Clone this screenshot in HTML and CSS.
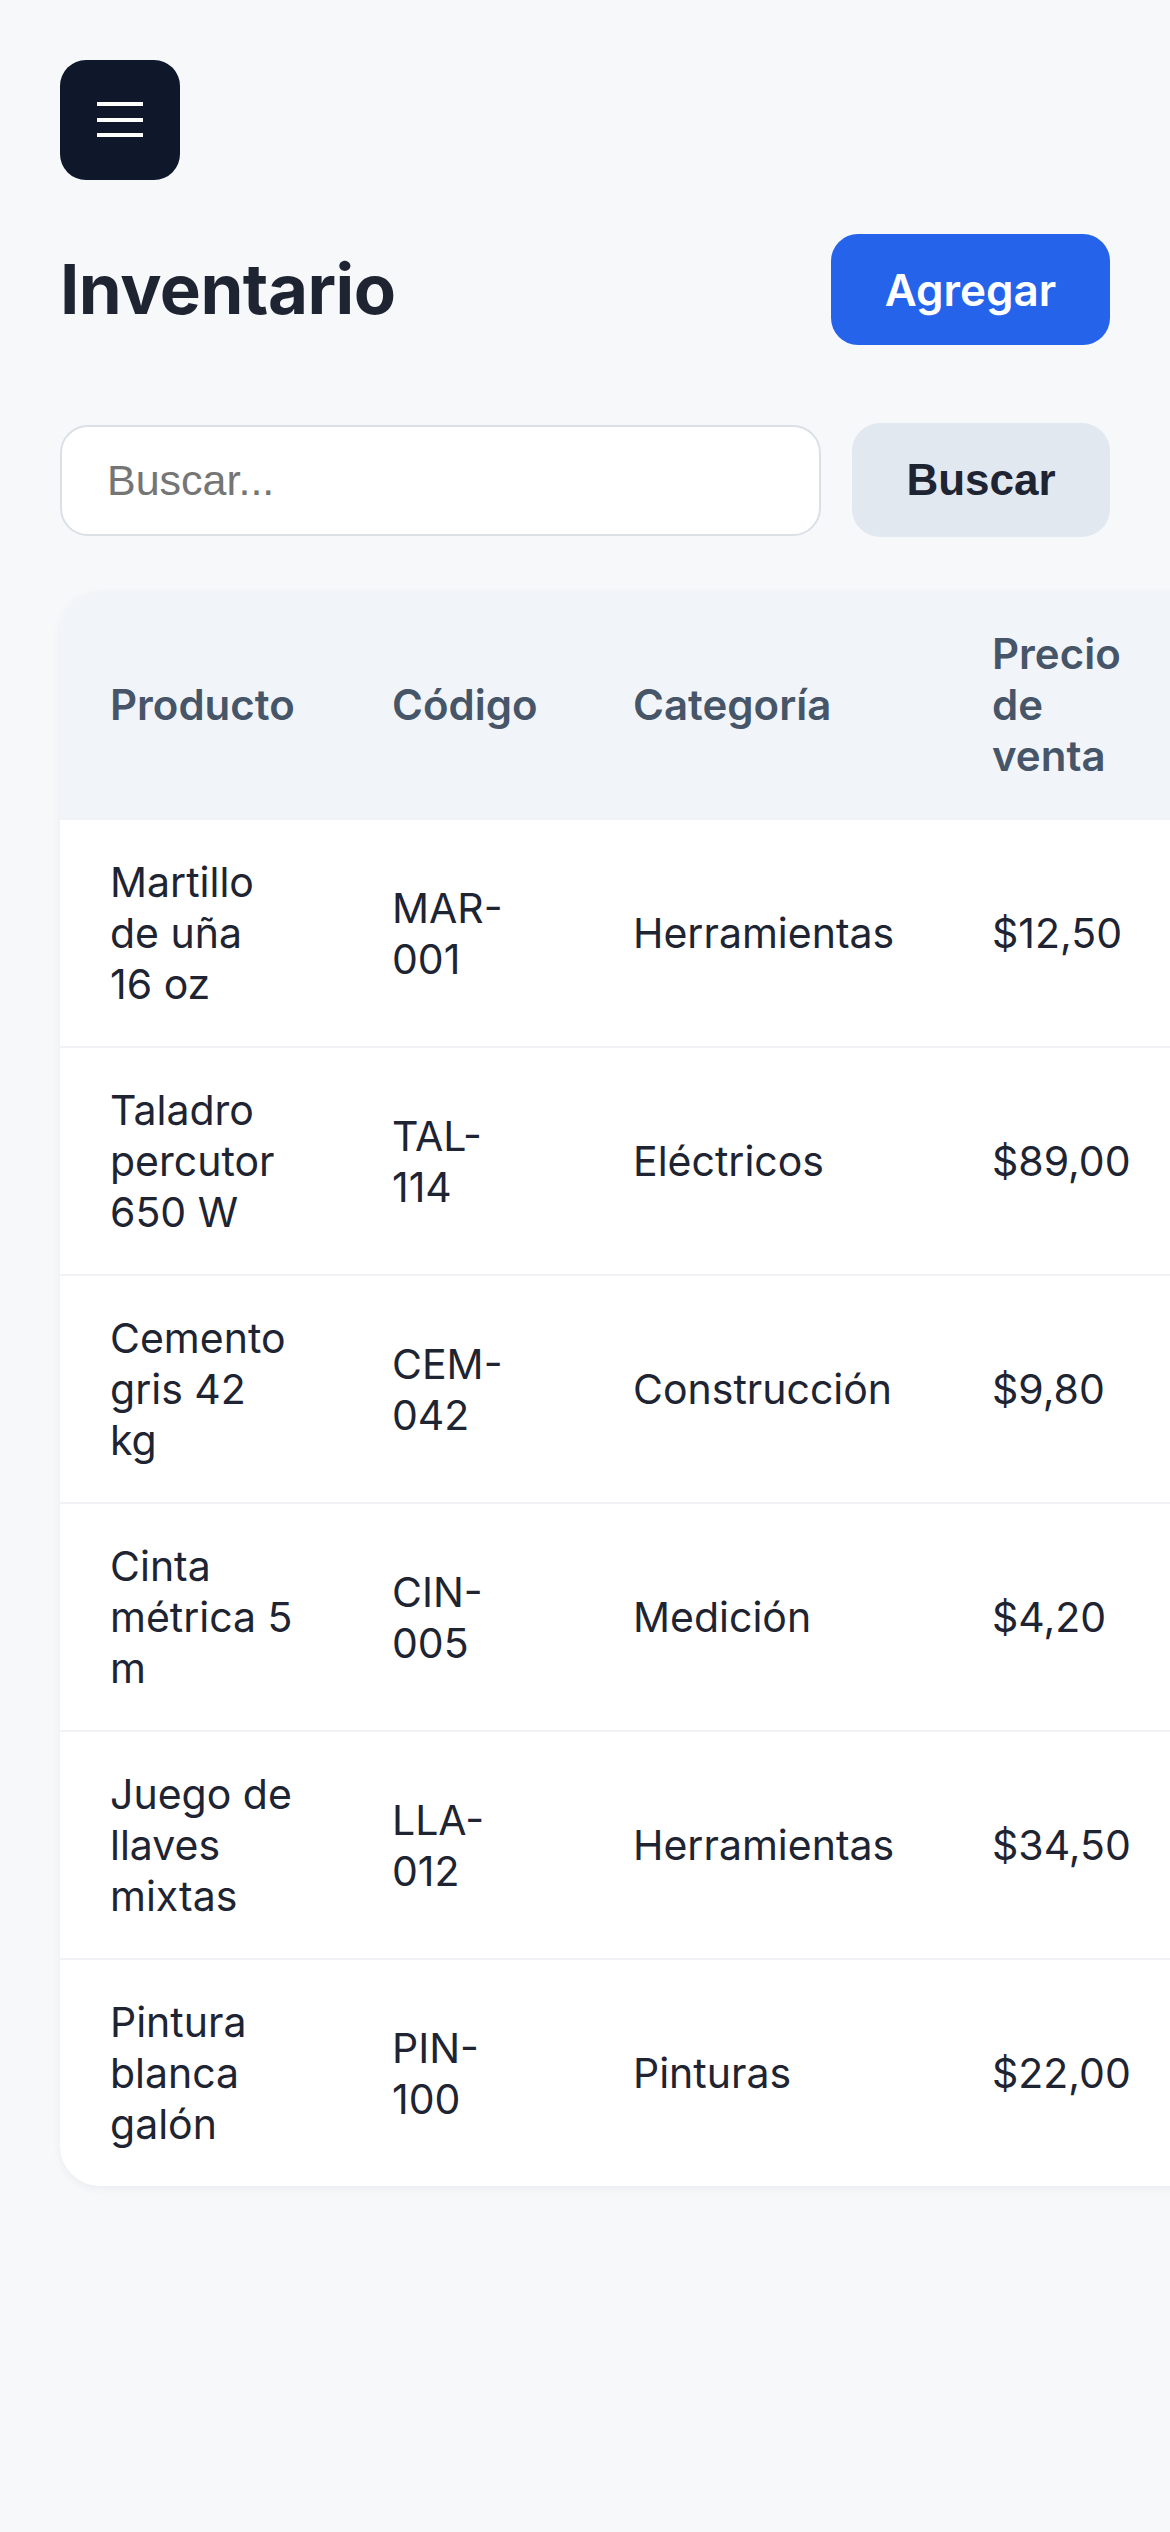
FILE: index.html
```html
<!DOCTYPE html>
<html lang="es">
<head>
<meta charset="utf-8">
<title>Inventario</title>
<link rel="stylesheet" href="styles.css">
</head>
<body>
<main class="page">
  <button class="menu-btn" aria-label="Menú">
    <svg width="120" height="120" viewBox="0 0 120 120" aria-hidden="true">
      <rect x="37" y="42" width="46" height="4" fill="#ffffff"/>
      <rect x="37" y="58" width="46" height="4" fill="#ffffff"/>
      <rect x="37" y="73" width="46" height="4" fill="#ffffff"/>
    </svg>
  </button>

  <div class="title-row">
    <h1 class="title">Inventario</h1>
    <button class="add-btn">Agregar</button>
  </div>

  <div class="search-row">
    <input class="search-input" type="text" placeholder="Buscar...">
    <button class="search-btn">Buscar</button>
  </div>

  <div class="card">
    <table class="inv-table">
      <colgroup>
        <col class="c-prod">
        <col class="c-code">
        <col class="c-cat">
        <col class="c-price">
        <col class="c-stock">
      </colgroup>
      <thead>
        <tr>
          <th>Producto</th>
          <th>Código</th>
          <th>Categoría</th>
          <th>Precio de venta</th>
          <th>Stock</th>
        </tr>
      </thead>
      <tbody>
        <tr><td>Martillo de uña 16 oz</td><td>MAR-001</td><td>Herramientas</td><td>$12,50</td><td>24</td></tr>
        <tr><td>Taladro percutor 650 W</td><td>TAL-114</td><td>Eléctricos</td><td>$89,00</td><td>8</td></tr>
        <tr><td>Cemento gris 42 kg</td><td>CEM-042</td><td>Construcción</td><td>$9,80</td><td>120</td></tr>
        <tr><td>Cinta métrica 5 m</td><td>CIN-005</td><td>Medición</td><td>$4,20</td><td>45</td></tr>
        <tr><td>Juego de llaves mixtas</td><td>LLA-012</td><td>Herramientas</td><td>$34,50</td><td>12</td></tr>
        <tr><td>Pintura blanca galón</td><td>PIN-100</td><td>Pinturas</td><td>$22,00</td><td>30</td></tr>
      </tbody>
    </table>
  </div>
</main>
</body>
</html>
```

FILE: styles.css
```css
html, body {
  margin: 0;
  padding: 0;
  overflow-x: hidden;
}

body {
  background: #f7f8fa;
  font-family: Inter, "Noto Sans", sans-serif;
  color: #1e293b;
}

.page {
  padding: 60px;
  min-height: 2532px;
  box-sizing: border-box;
}

.menu-btn {
  display: block;
  width: 120px;
  height: 120px;
  padding: 0;
  border: 0;
  border-radius: 26px;
  background: #0f172a;
}

.menu-btn svg {
  display: block;
}

.title-row {
  margin-top: 54px;
  display: flex;
  align-items: center;
  justify-content: space-between;
}

.title {
  margin: 0;
  font-family: Inter, sans-serif;
  font-weight: 700;
  font-size: 69px;
  line-height: 1.2;
  color: #1e2432;
  letter-spacing: -0.5px;
}

.add-btn {
  width: 279px;
  height: 111px;
  border: 0;
  border-radius: 27px;
  background: #2563eb;
  color: #ffffff;
  font-family: Inter, sans-serif;
  font-weight: 600;
  font-size: 44px;
}

.search-row {
  margin-top: 78px;
  display: flex;
  align-items: center;
  gap: 31px;
}

.search-input {
  flex: 1;
  min-width: 0;
  height: 111px;
  box-sizing: border-box;
  border: 2px solid #dbe0e7;
  border-radius: 28px;
  background: #ffffff;
  padding: 0 45px;
  font-family: "Liberation Sans", Arial, sans-serif;
  font-size: 43px;
  color: #1e293b;
  outline: none;
}

.search-input::placeholder {
  color: #757575;
}

.search-btn {
  width: 258px;
  height: 114px;
  border: 0;
  border-radius: 28px;
  background: #e2e8f0;
  color: #1e2432;
  font-family: "Liberation Sans", Arial, sans-serif;
  font-weight: 700;
  font-size: 44px;
}

.card {
  margin-top: 54px;
  width: max-content;
  background: #ffffff;
  border-radius: 40px;
  overflow: hidden;
  box-shadow: 0 3px 10px rgba(15, 23, 42, 0.05);
}

.inv-table {
  border-collapse: collapse;
  table-layout: fixed;
  width: 1400px;
}

.c-prod { width: 282px; }
.c-code { width: 241px; }
.c-cat { width: 359px; }
.c-price { width: 237px; }
.c-stock { width: 281px; }

.inv-table th,
.inv-table td {
  text-align: left;
  vertical-align: middle;
  line-height: 51px;
  overflow-wrap: normal;
}

.inv-table th {
  background: #f1f5f9;
  color: #475569;
  font-size: 42px;
  font-weight: 600;
  padding: 37px 48px 37px 50px;
}

.inv-table td {
  border-top: 2px solid #f0f2f5;
  color: #1e2432;
  font-size: 41px;
  font-weight: 400;
  padding: 37px 48px 36px 50px;
}
```
